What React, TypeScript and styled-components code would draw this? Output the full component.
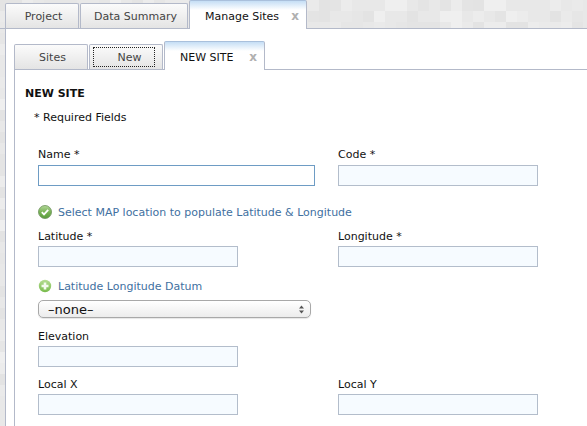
import styled, { createGlobalStyle } from 'styled-components'

const GlobalStyle = createGlobalStyle`
  html, body {
    margin: 0;
    padding: 0;
    background: #e9e9e9;
  }
`

const Page = styled.div`
  position: relative;
  width: 587px;
  height: 426px;
  overflow: hidden;
  display: flex;
  flex-direction: column;
  font-family: 'DejaVu Sans', Verdana, sans-serif;
  font-size: 11px;
  color: #111;
  background-color: #e8e8e8;
`

const Texture = styled.svg`
  position: absolute;
  left: 0;
  top: 0;
`

const TabBar = styled.div<{ $inner?: boolean }>`
  position: relative;
  display: flex;
  align-items: flex-end;
  gap: 1px;
  height: 29px;
  padding-left: ${(p) => (p.$inner ? '0' : '5px')};
  box-sizing: border-box;
  border-bottom: 1px solid #b3b9c9;
  flex-shrink: 0;
`

const Tab = styled.div<{ $width: number }>`
  width: ${(p) => p.$width}px;
  height: 25px;
  box-sizing: border-box;
  display: flex;
  align-items: center;
  justify-content: center;
  padding-left: 3px;
  color: #444;
  border: 1px solid #b3b9c9;
  border-bottom: none;
  border-radius: 2px 2px 0 0;
  background: linear-gradient(#fbfbfb, #e4e4e4);
`

const ActiveTab = styled.div<{ $width: number }>`
  width: ${(p) => p.$width}px;
  height: 29px;
  box-sizing: border-box;
  display: flex;
  align-items: center;
  justify-content: space-between;
  padding: 2px 7px 0 15px;
  color: #111;
  border: 1px solid #b3b9c9;
  border-top: 1px solid #a9c0dc;
  border-bottom: none;
  border-radius: 2px 2px 0 0;
  background: linear-gradient(#c5def5, #ffffff 9px);
  margin-bottom: -1px;
`

const CloseMark = styled.span`
  font-family: 'DejaVu Sans', sans-serif;
  font-weight: bold;
  font-size: 12px;
  color: #b0b0b0;
`

const Dotted = styled.span`
  width: 62px;
  height: 20px;
  margin-right: 7px;
  box-sizing: border-box;
  border: 1px dotted #222;
  display: flex;
  align-items: center;
  justify-content: center;
  padding-left: 11px;
`

const OuterPanel = styled.div`
  position: relative;
  flex: 1;
  margin-left: 5px;
  background: #fff;
  border-left: 1px solid #b3b9c9;
  padding: 12px 0 0 8px;
  display: flex;
  flex-direction: column;
`

const InnerPanel = styled.div`
  flex: 1;
  border-left: 1px solid #b3b9c9;
  padding: 17px 0 0 10px;
`

const Heading = styled.h2`
  margin: 0;
  font-size: 11px;
  line-height: 14px;
  font-weight: bold;
  color: #111;
`

const Required = styled.div`
  margin: 10px 0 0 9px;
  line-height: 14px;
`

const Form = styled.div`
  display: grid;
  grid-template-columns: 300px 200px;
  margin: 23px 0 0 13px;
`

const Field = styled.div<{ $gap?: number }>`
  display: flex;
  flex-direction: column;
  margin-bottom: ${(p) => p.$gap ?? 0}px;
`

const Label = styled.label<{ $tight?: boolean }>`
  line-height: 14px;
  margin-bottom: ${(p) => (p.$tight ? 2 : 3)}px;
`

const TextInput = styled.input<{ $width?: number; $focus?: boolean }>`
  width: ${(p) => p.$width ?? 200}px;
  height: 21px;
  box-sizing: border-box;
  padding: 0 4px;
  margin: 0;
  outline: none;
  background: ${(p) => (p.$focus ? '#fff' : '#f6fbff')};
  border: 1px solid ${(p) => (p.$focus ? '#6e9cc4' : '#b3bdcb')};
`

const LinkRow = styled.div<{ $top: number; $bottom: number }>`
  grid-column: 1 / -1;
  display: flex;
  align-items: center;
  gap: 6px;
  height: 16px;
  margin: ${(p) => p.$top}px 0 ${(p) => p.$bottom}px;
  color: #41709f;
`

const SelectBox = styled.div`
  grid-column: 1 / -1;
  width: 273px;
  height: 18px;
  box-sizing: border-box;
  display: flex;
  align-items: center;
  justify-content: space-between;
  padding: 0 6px 0 9px;
  margin-bottom: 12px;
  font-size: 13px;
  border: 1px solid #a8a8a8;
  border-radius: 5px;
  background: linear-gradient(#ffffff, #ececec);
  box-shadow: 0 1px 1px rgba(0, 0, 0, 0.1);
`

// seeded so the header texture stays the same on every load
const blocks = (() => {
  const out: { x: number; y: number; w: number; shade: string }[] = []
  const shades = ['#e4e4e4', '#e6e6e6', '#eaeaea', '#ececec', '#efefef', '#e3e3e3']
  let seed = 17
  const next = () => {
    seed = (seed * 9301 + 49297) % 233280
    return seed / 233280
  }
  for (let y = 0; y < 426; y += 11) {
    const maxX = y < 33 ? 587 : 6
    for (let x = 0; x < maxX; x += 11) {
      const w = next() > 0.7 ? 22 : 11
      if (next() > 0.35) out.push({ x, y, w, shade: shades[Math.floor(next() * shades.length)] })
    }
  }
  return out
})()

function HeaderTexture() {
  return (
    <Texture width="587" height="426">
      {blocks.map((b, i) => (
        <rect key={i} x={b.x} y={b.y} width={b.w} height="11" fill={b.shade} />
      ))}
    </Texture>
  )
}

function CheckIcon() {
  return (
    <svg width="14" height="14" viewBox="0 0 14 14">
      <defs>
        <linearGradient id="greenBall" x1="0" y1="0" x2="0" y2="1">
          <stop offset="0" stopColor="#b4d89a" />
          <stop offset="0.5" stopColor="#79b356" />
          <stop offset="1" stopColor="#5a9c3c" />
        </linearGradient>
      </defs>
      <circle cx="7" cy="7" r="6.5" fill="url(#greenBall)" stroke="#6a8f58" strokeWidth="0.8" />
      <path d="M3.8 7.2 L6 9.4 L10.2 4.9" fill="none" stroke="#fff" strokeWidth="1.8" />
    </svg>
  )
}

function PlusIcon() {
  return (
    <svg width="14" height="14" viewBox="0 0 14 14">
      <defs>
        <linearGradient id="plusBall" x1="0" y1="0" x2="0" y2="1">
          <stop offset="0" stopColor="#b6dd93" />
          <stop offset="1" stopColor="#78bb4c" />
        </linearGradient>
      </defs>
      <circle cx="7" cy="7" r="6.2" fill="url(#plusBall)" />
      <path d="M7 3.5 V10.5 M3.5 7 H10.5" stroke="#f4fbee" strokeWidth="2.6" />
    </svg>
  )
}

function SelectArrows() {
  return (
    <svg width="5" height="9" viewBox="0 0 5 9">
      <path d="M2.5 0.5 L5 3.5 H0 Z M2.5 8.5 L0 5.5 H5 Z" fill="#555" />
    </svg>
  )
}

export default function App() {
  return (
    <Page>
      <GlobalStyle />
      <HeaderTexture />
      <TabBar>
        <Tab $width={74}>Project</Tab>
        <Tab $width={108}>Data Summary</Tab>
        <ActiveTab $width={118}>
          Manage Sites <CloseMark>x</CloseMark>
        </ActiveTab>
      </TabBar>
      <OuterPanel>
        <TabBar $inner>
          <Tab $width={74}>Sites</Tab>
          <Tab $width={74}>
            <Dotted>New</Dotted>
          </Tab>
          <ActiveTab $width={101}>
            NEW SITE <CloseMark>x</CloseMark>
          </ActiveTab>
        </TabBar>
        <InnerPanel>
          <Heading>NEW SITE</Heading>
          <Required>* Required Fields</Required>
          <Form>
            <Field>
              <Label>Name *</Label>
              <TextInput $width={277} $focus />
            </Field>
            <Field>
              <Label>Code *</Label>
              <TextInput />
            </Field>
            <LinkRow $top={18} $bottom={10}>
              <CheckIcon />
              Select MAP location to populate Latitude &amp; Longitude
            </LinkRow>
            <Field>
              <Label $tight>Latitude *</Label>
              <TextInput />
            </Field>
            <Field>
              <Label $tight>Longitude *</Label>
              <TextInput />
            </Field>
            <LinkRow $top={11} $bottom={6}>
              <PlusIcon />
              Latitude Longitude Datum
            </LinkRow>
            <SelectBox>
              –none–
              <SelectArrows />
            </SelectBox>
            <Field $gap={11}>
              <Label $tight>Elevation</Label>
              <TextInput />
            </Field>
            <div />
            <Field>
              <Label $tight>Local X</Label>
              <TextInput />
            </Field>
            <Field>
              <Label $tight>Local Y</Label>
              <TextInput />
            </Field>
          </Form>
        </InnerPanel>
      </OuterPanel>
    </Page>
  )
}
